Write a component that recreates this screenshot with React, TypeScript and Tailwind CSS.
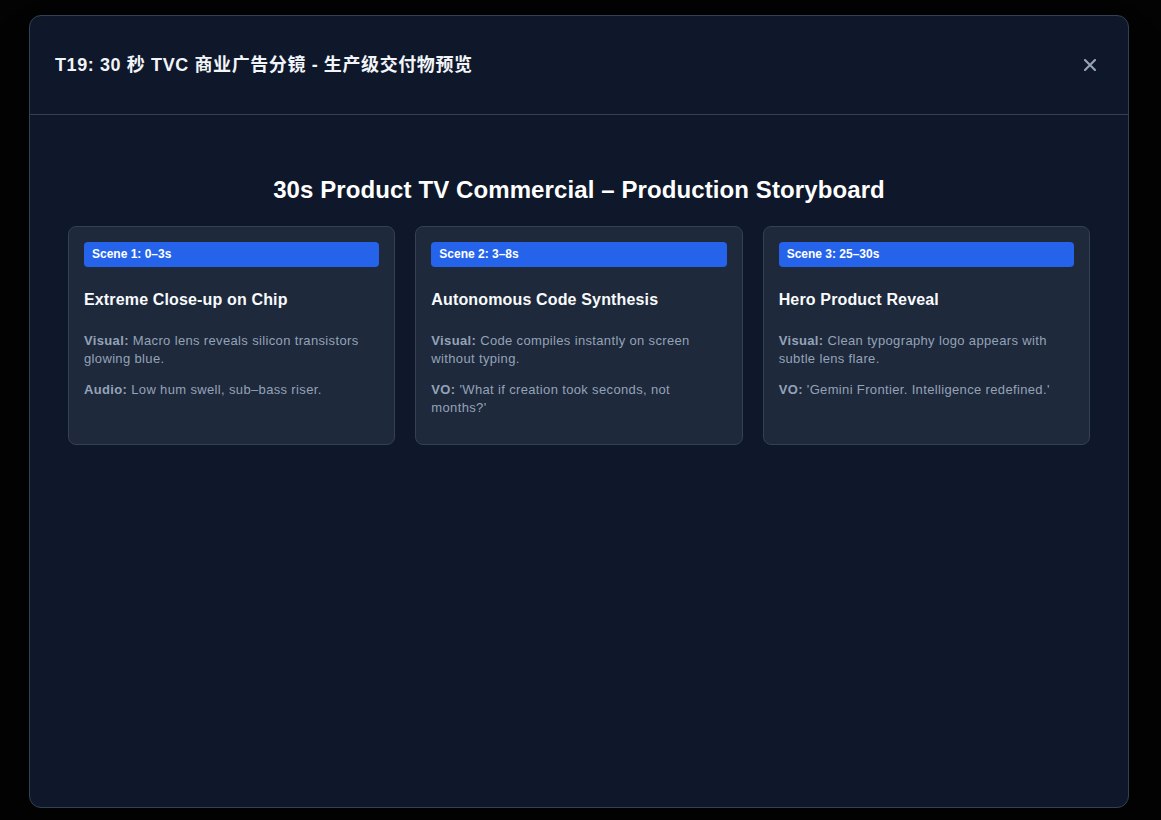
import React from "react";

const scenes = [
  {
    badge: "Scene 1: 0–3s",
    title: "Extreme Close-up on Chip",
    lines: [
      { label: "Visual:", text: "Macro lens reveals silicon transistors glowing blue." },
      { label: "Audio:", text: "Low hum swell, sub–bass riser." },
    ],
  },
  {
    badge: "Scene 2: 3–8s",
    title: "Autonomous Code Synthesis",
    lines: [
      { label: "Visual:", text: "Code compiles instantly on screen without typing." },
      { label: "VO:", text: "'What if creation took seconds, not months?'" },
    ],
  },
  {
    badge: "Scene 3: 25–30s",
    title: "Hero Product Reveal",
    lines: [
      { label: "Visual:", text: "Clean typography logo appears with subtle lens flare." },
      { label: "VO:", text: "'Gemini Frontier. Intelligence redefined.'" },
    ],
  },
];

export default function App() {
  return (
    <div
      className="w-[1161px] h-[820px] bg-[#030303] overflow-hidden pt-[15px] pl-[29px]"
      style={{ fontFamily: '"Liberation Sans", "Noto Sans CJK SC", Arial, sans-serif' }}
    >
      <div className="w-[1100px] h-[793px] bg-[#0f172a] border border-[#334155] rounded-xl flex flex-col overflow-hidden shadow-2xl">
        <div className="h-[99px] shrink-0 border-b border-[#334155] flex items-center justify-between pl-[25px] pr-[28px]">
          <h2 className="text-[18px] font-bold text-[#f1f5f9] leading-6 tracking-[0.6px]">
            T19: 30 秒 TVC 商业广告分镜 - 生产级交付物预览
          </h2>
          <button className="p-1 text-[#94a3b8]" aria-label="Close">
            <svg width="12" height="12" viewBox="0 0 12 12" fill="none">
              <path d="M1 1L11 11M11 1L1 11" stroke="currentColor" strokeWidth="2.2" strokeLinecap="round" />
            </svg>
          </button>
        </div>
        <div className="flex-1 px-[38px] pt-[59px]">
          <h1 className="text-center text-[24px] leading-8 font-bold text-white mb-[20px] tracking-[0.1px]">
            30s Product TV Commercial – Production Storyboard
          </h1>
          <div className="grid grid-cols-3 gap-5">
            {scenes.map((s) => (
              <div
                key={s.badge}
                className="bg-[#1e293b] border border-[#334155] rounded-lg px-[15px] pt-[15px] pb-[14px]"
              >
                <div className="bg-[#2563eb] rounded text-white text-[12px] font-bold leading-[25px] px-2">
                  {s.badge}
                </div>
                <h3 className="mt-[21px] text-[16px] leading-6 font-bold text-[#f8fafc] tracking-[0.15px]">{s.title}</h3>
                <div className="mt-5">
                  {s.lines.map((l) => (
                    <p key={l.label} className="text-[13px] leading-[18px] text-[#94a3b8] mb-[13px] tracking-[0.35px]">
                      <strong className="font-bold">{l.label}</strong> {l.text}
                    </p>
                  ))}
                </div>
              </div>
            ))}
          </div>
        </div>
      </div>
    </div>
  );
}
